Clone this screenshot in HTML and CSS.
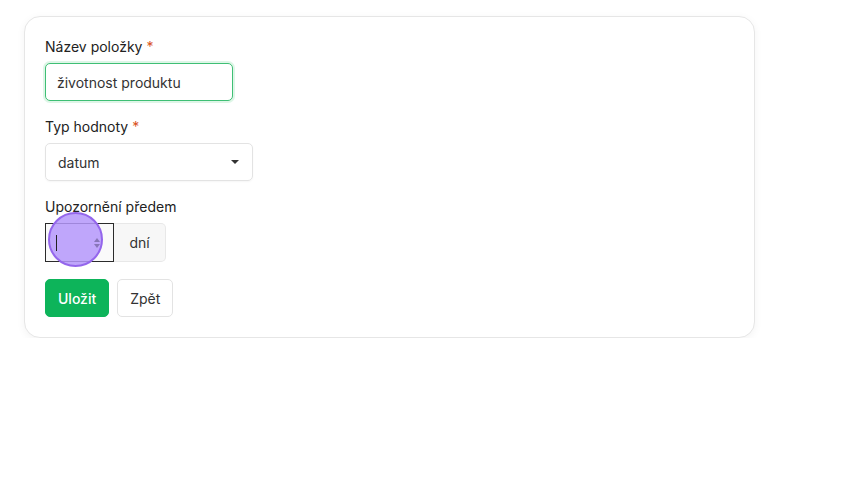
FILE: index.html
```html
<!DOCTYPE html>
<html lang="cs">
<head>
    <meta charset="UTF-8">
    <meta name="viewport" content="width=device-width, initial-scale=1.0">
    <title>Úprava položky</title>
    <link rel="stylesheet" href="styles.css">
</head>
<body>
    <div class="page">
        <h2 class="page-title">Úprava položky</h2>

        <form class="card">
            <div class="field">
                <label for="name">Název položky <span class="req">*</span></label>
                <input type="text" id="name" class="input input-focus" value="životnost produktu">
            </div>

            <div class="field">
                <label for="type">Typ hodnoty <span class="req">*</span></label>
                <div class="select">
                    <span>datum</span>
                    <span class="caret"></span>
                </div>
            </div>

            <div class="field">
                <label for="notice">Upozornění předem</label>
                <div class="input-group">
                    <div class="number">
                        <span class="text-cursor"></span>
                        <svg class="spin" width="8" height="12" viewBox="0 0 8 12">
                            <path d="M4 1 L7 5 H1 Z" fill="#7a6aa8"/>
                            <path d="M4 11 L7 7 H1 Z" fill="#7a6aa8"/>
                        </svg>
                        <span class="click-dot"></span>
                    </div>
                    <span class="addon">dní</span>
                </div>
            </div>

            <div class="actions">
                <button type="button" class="btn btn-primary">Uložit</button>
                <button type="button" class="btn btn-light">Zpět</button>
            </div>
        </form>
    </div>
</body>
</html>
```

FILE: styles.css
```css
body {
    margin: 0;
    background: #fff;
    color: #222;
    font-family: Inter, "Noto Sans", Arial, sans-serif;
    font-size: 14px;
}

.page {
    padding: 0 24px;
}

.page-title {
    margin: -23px 0 0;
    height: 24px;
    line-height: 24px;
    font-size: 18px;
    font-weight: 600;
    padding-left: 6px;
}

.card {
    margin-top: 15px;
    width: 689px;
    padding: 20px;
    border: 1px solid #e6e6e6;
    border-radius: 16px;
    box-shadow: 0 2px 8px rgba(0, 0, 0, 0.05);
    background: #fff;
}

.field {
    margin-bottom: 16px;
}

.field label {
    display: block;
    line-height: 20px;
    margin-bottom: 6px;
    font-weight: 400;
    color: #222;
}

.req {
    color: #d9531e;
}

.input {
    display: block;
    box-sizing: border-box;
    width: 188px;
    height: 38px;
    padding: 0 11px;
    border: 1px solid #e3e3e3;
    border-radius: 5px;
    font-family: inherit;
    font-size: 14px;
    color: #333;
}

.input-focus {
    outline: none;
    border-color: #3fbf75;
    box-shadow: 0 0 0 2px rgba(34, 197, 94, 0.15);
}

.select {
    box-sizing: border-box;
    width: 208px;
    height: 38px;
    padding: 0 12px;
    display: flex;
    align-items: center;
    justify-content: space-between;
    border: 1px solid #e3e3e3;
    border-radius: 5px;
    box-shadow: 0 1px 2px rgba(0, 0, 0, 0.04);
    color: #333;
}

.caret {
    width: 0;
    height: 0;
    border-left: 4px solid transparent;
    border-right: 4px solid transparent;
    border-top: 4px solid #333;
    margin-right: 1px;
}

.input-group {
    display: flex;
    height: 39px;
}

.number {
    position: relative;
    box-sizing: border-box;
    width: 69px;
    border: 1px solid #2b2b2b;
    background: #fafafa;
    display: flex;
    align-items: center;
    justify-content: space-between;
    padding: 0 12px 0 10px;
}

.text-cursor {
    width: 1px;
    height: 16px;
    background: #222;
    position: relative;
    z-index: 2;
}

.spin {
    position: relative;
    z-index: 2;
    opacity: 0.8;
}

.click-dot {
    position: absolute;
    left: 2px;
    top: -12px;
    width: 51px;
    height: 51px;
    border-radius: 50%;
    background: rgba(180, 150, 250, 0.85);
    border: 2px solid #9466ec;
    z-index: 1;
}

.addon {
    box-sizing: border-box;
    width: 52px;
    display: flex;
    align-items: center;
    justify-content: center;
    background: #f7f7f7;
    border: 1px solid #e8e8e8;
    border-left: none;
    border-radius: 0 5px 5px 0;
    color: #333;
}

.actions {
    display: flex;
    gap: 8px;
    padding-top: 1px;
}

.btn {
    height: 38px;
    padding: 0 12px;
    border-radius: 5px;
    font-family: inherit;
    font-size: 14px;
    font-weight: 500;
    cursor: pointer;
}

.btn-primary {
    background: #0db45a;
    border: 1px solid #0db45a;
    color: #fff;
}

.btn-light {
    background: #fff;
    border: 1px solid #e3e3e3;
    color: #333;
    font-weight: 400;
}
```
